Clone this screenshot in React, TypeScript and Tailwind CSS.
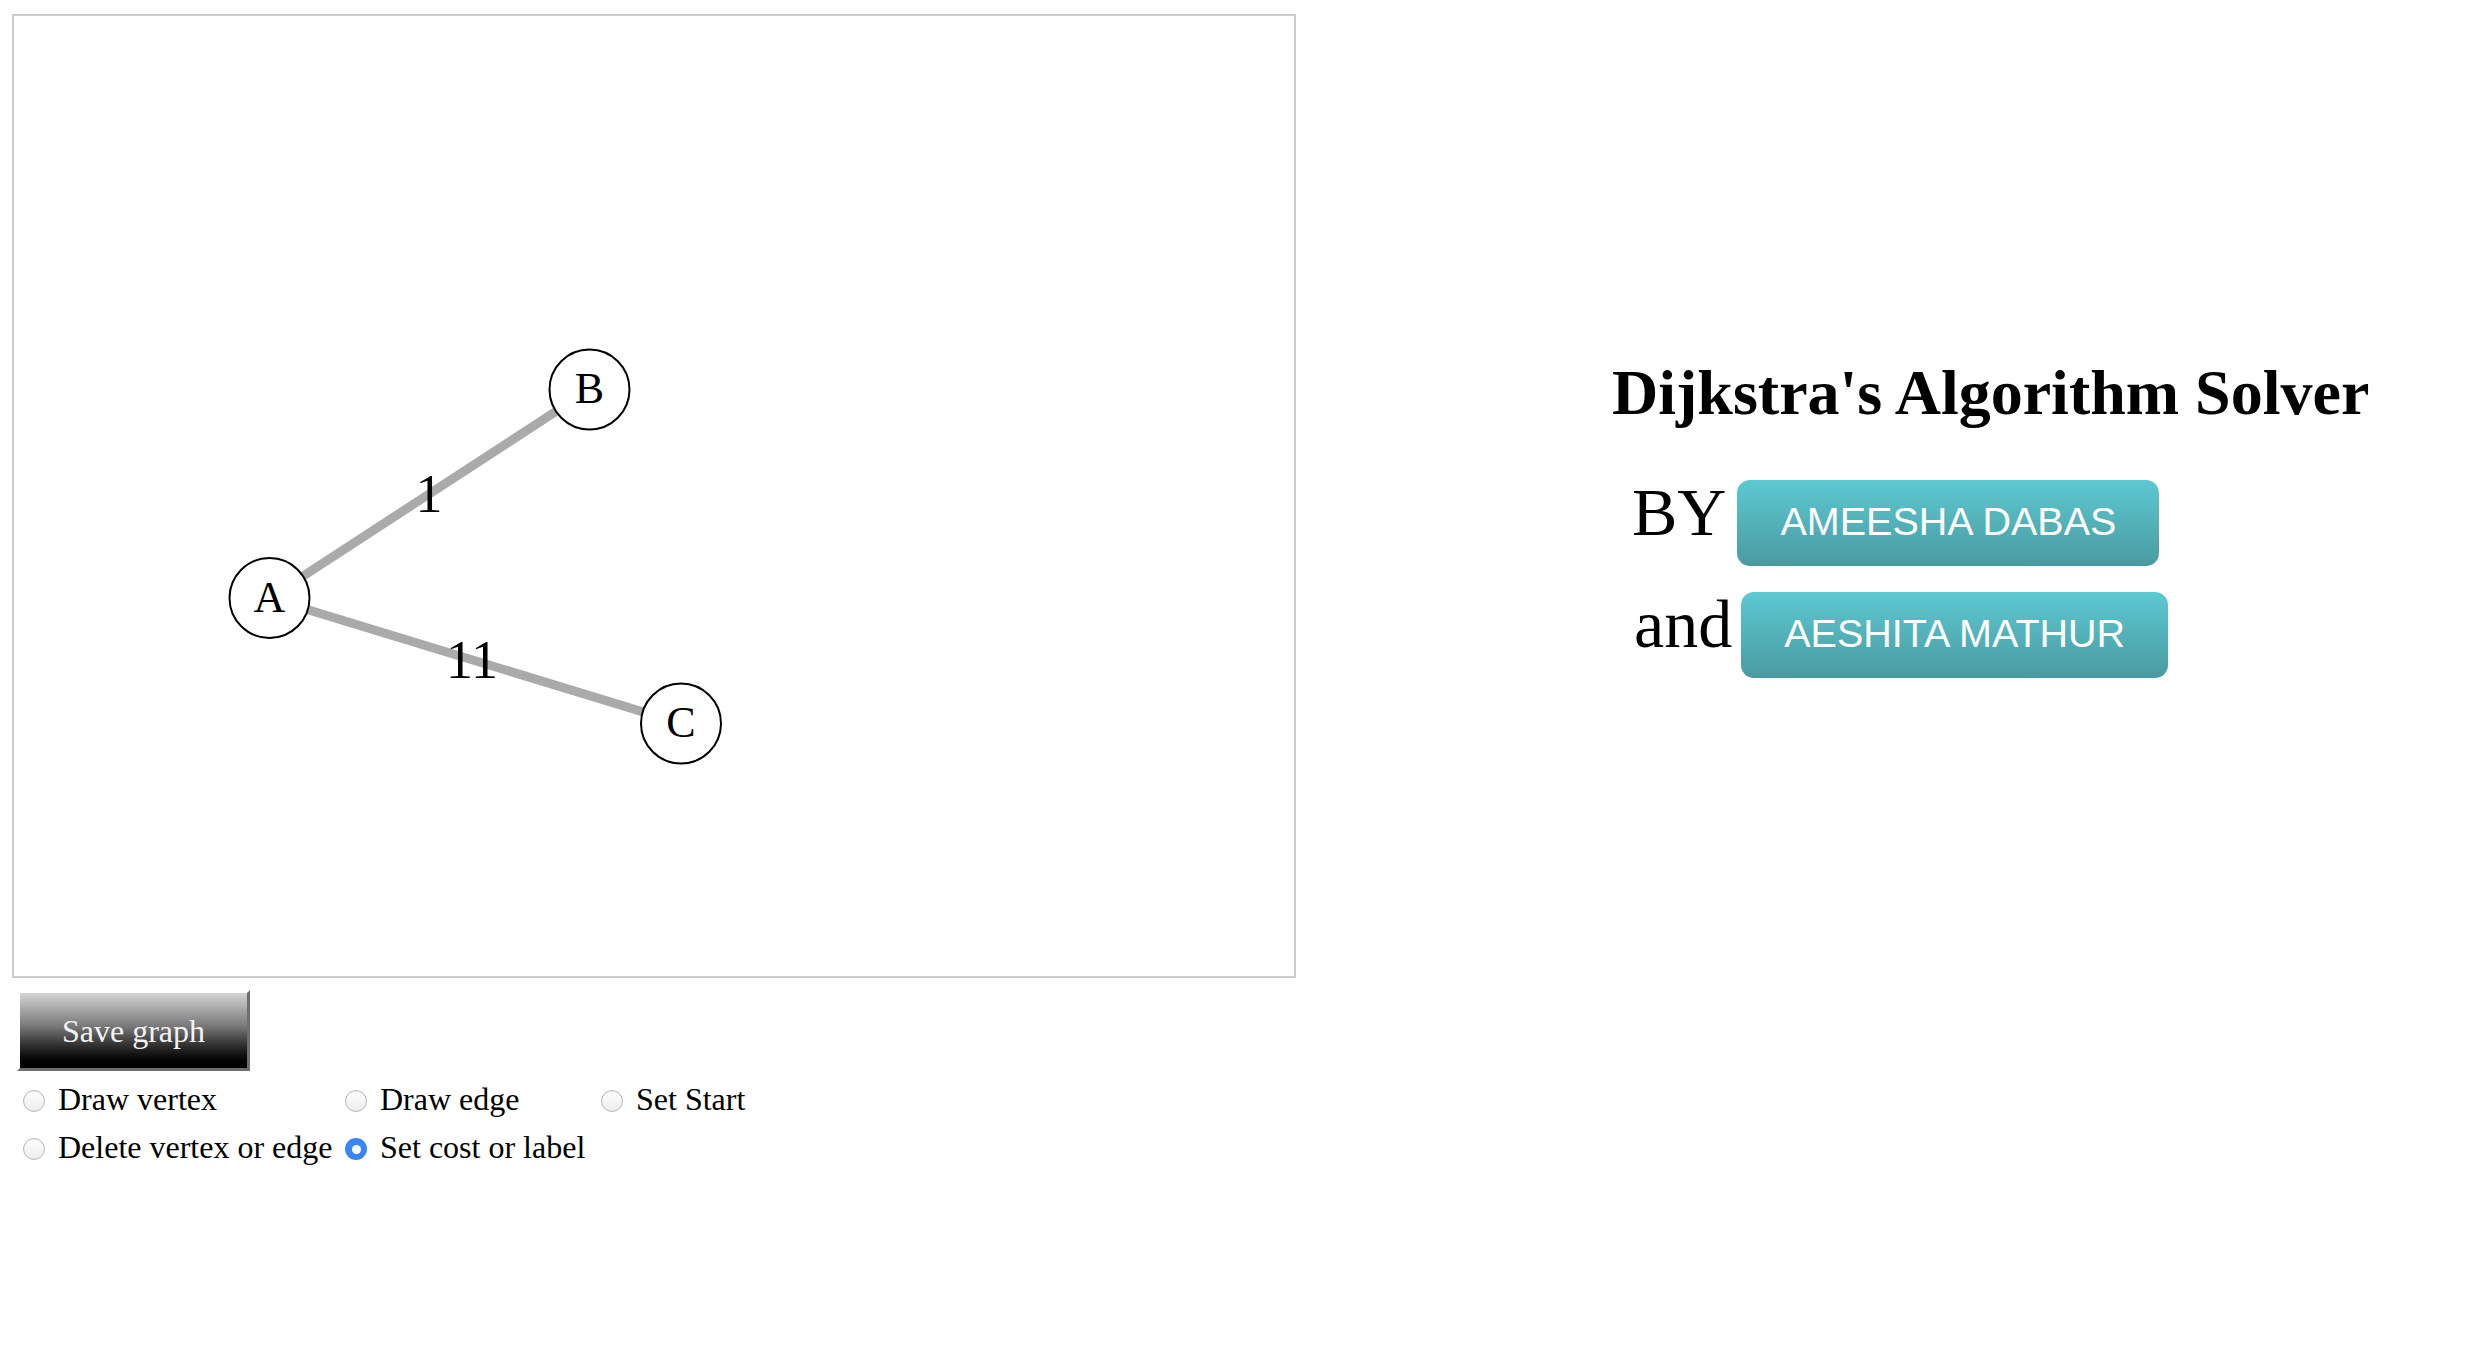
import React from "react";

const nodes = [
  { id: "A", x: 255.5, y: 582 },
  { id: "B", x: 575.5, y: 373.5 },
  { id: "C", x: 667, y: 707.5 },
];

function Radio({ checked }: { checked?: boolean }) {
  if (checked) {
    return (
      <span className="mt-[4px] flex h-[22px] w-[22px] shrink-0 items-center justify-center rounded-full bg-[#3b86f7]">
        <span className="h-[9px] w-[9px] rounded-full bg-white" />
      </span>
    );
  }
  return (
    <span className="mt-[4px] h-[22px] w-[22px] shrink-0 rounded-full border border-[#b9b9b9] bg-linear-to-b from-[#ffffff] to-[#ececec] shadow-[inset_0_1px_1px_rgba(0,0,0,0.06)]" />
  );
}

function Option({ label, checked }: { label: string; checked?: boolean }) {
  return (
    <div className="flex h-[48px] items-center">
      <Radio checked={checked} />
      <span className="ml-[13px] whitespace-nowrap text-[32px] leading-[48px] text-black">{label}</span>
    </div>
  );
}

export default function App() {
  const serif = { fontFamily: "'Liberation Serif', 'Times New Roman', serif" };
  const sans = { fontFamily: "'Liberation Sans', Arial, sans-serif" };
  return (
    <div className="flex min-h-screen bg-white pl-[12px] pt-[14px] text-black" style={serif}>
      <div className="flex flex-col">
        <div className="h-[964px] w-[1284px] border-2 border-[#cccccc] bg-white">
          <svg width={1280} height={960} viewBox="0 0 1280 960" className="block">
            <line x1={255.5} y1={582} x2={575.5} y2={373.5} stroke="#aaaaaa" strokeWidth={9} />
            <line x1={255.5} y1={582} x2={667} y2={707.5} stroke="#aaaaaa" strokeWidth={9} />
            <text x={415} y={495.7} textAnchor="middle" fontSize={54} fill="#000" style={serif}>
              1
            </text>
            <text x={458} y={662.3} textAnchor="middle" fontSize={54} fill="#000" style={serif}>
              11
            </text>
            {nodes.map((n) => (
              <g key={n.id}>
                <circle cx={n.x} cy={n.y} r={40} fill="#ffffff" stroke="#000000" strokeWidth={2} />
                <text x={n.x} y={n.y + 13.7} textAnchor="middle" fontSize={44} fill="#000" style={serif}>
                  {n.id}
                </text>
              </g>
            ))}
          </svg>
        </div>
        <button
          className="ml-[5px] mt-[12px] flex h-[81px] w-[233px] items-center justify-center border-[3px] border-t-white border-l-white border-r-[#6e6e6e] border-b-[#6e6e6e] bg-linear-to-b from-[#d6d6d6] via-[#777777] via-45% to-[#000000] text-[32px] leading-none text-[#f2f2f2]"
          style={serif}
        >
          Save graph
        </button>
        <div className="ml-[11px] mt-[4px] grid w-max grid-cols-[322px_256px_auto]">
          <Option label="Draw vertex" />
          <Option label="Draw edge" />
          <Option label="Set Start" />
          <Option label="Delete vertex or edge" />
          <Option label="Set cost or label" checked />
        </div>
      </div>
      <div className="ml-[316px] flex flex-col pt-[347px]">
        <h1 className="whitespace-nowrap text-[64px] font-bold leading-[64px]">Dijkstra's Algorithm Solver</h1>
        <div className="mt-[53px] flex items-baseline pl-[20px]">
          <span className="text-[68px] leading-[68px]">BY</span>
          <span
            className="ml-[11px] rounded-[13px] bg-linear-to-b from-[#5dc9d2] to-[#4a9aa0] px-[43px] pb-[25px] pt-[22px] text-[39.5px] leading-[39px] text-white"
            style={sans}
          >
            AMEESHA DABAS
          </span>
        </div>
        <div className="mt-[24px] flex items-baseline pl-[22px]">
          <span className="text-[68px] leading-[68px]">and</span>
          <span
            className="ml-[9px] rounded-[13px] bg-linear-to-b from-[#5dc9d2] to-[#4a9aa0] px-[43px] pb-[25px] pt-[22px] text-[39.5px] leading-[39px] text-white"
            style={sans}
          >
            AESHITA MATHUR
          </span>
        </div>
      </div>
    </div>
  );
}
